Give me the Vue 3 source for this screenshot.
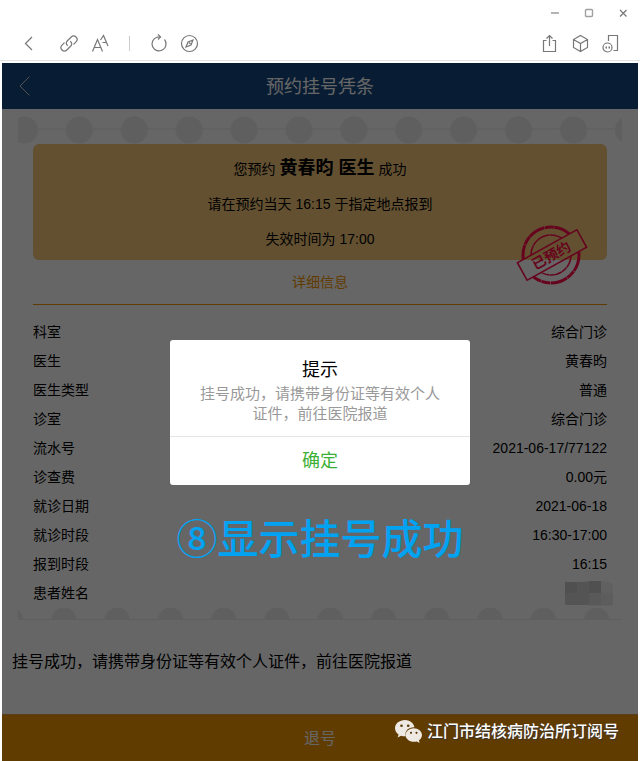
<template>
  <div class="window">
    <header class="chrome">
      <div class="title-bar">
        <button type="button" class="win-btn" aria-label="最小化">
          <svg width="12" height="12" viewBox="0 0 12 12"><path d="M2 6h8" stroke="#b4b4b4" stroke-width="2" /></svg>
        </button>
        <button type="button" class="win-btn" aria-label="最大化">
          <svg width="12" height="12" viewBox="0 0 12 12"><rect x="2.5" y="2.5" width="7" height="7" rx="1" fill="none" stroke="#a0a0a0" stroke-width="1.400" /></svg>
        </button>
        <button type="button" class="win-btn" aria-label="关闭">
          <svg width="12" height="12" viewBox="0 0 12 12"><path d="M3 3l6.500 6.500M9.500 3L3 9.500" stroke="#777" stroke-width="1.200" /></svg>
        </button>
      </div>
      <nav class="toolbar">
        <div class="tools">
          <button type="button" class="tool back" aria-label="返回">
            <svg viewBox="0 0 20 20"><path d="M14 4L7.500 10.500 14 17" /></svg>
          </button>
          <button type="button" class="tool" aria-label="复制链接">
            <svg viewBox="0 0 20 20">
              <path d="M8.800 12.800C7 11.500 6.800 9.500 8.200 8l4-4a3.400 3.400 0 0 1 4.800 0 3.400 3.400 0 0 1 0 4.800l-2.500 2.500" />
              <path d="M11.200 8.200c1.800 1.300 2 3.300.6 4.800l-4 4A3.400 3.400 0 0 1 3 17a3.400 3.400 0 0 1 0-4.800l2.500-2.500" />
            </svg>
          </button>
          <button type="button" class="tool" aria-label="字体大小">
            <svg viewBox="0 0 20 20">
              <path d="M2.500 18.500L7.500 6.500l5 12M4.500 14.500h6" />
              <path d="M10.500 7L13.500 2.500l4.500 10.500M12.500 9.500h4" />
            </svg>
          </button>
          <span class="divider"></span>
          <button type="button" class="tool" aria-label="刷新">
            <svg viewBox="0 0 20 20">
              <path d="M15.500 6.500A7 7 0 1 1 8 4.200l3.500-.2" />
              <path d="M9 1.500L11.500 4 9 6.500" />
            </svg>
          </button>
          <button type="button" class="tool" aria-label="浏览器打开">
            <svg viewBox="0 0 20 20">
              <circle cx="9.500" cy="10.500" r="8" />
              <path d="M13 7l-2 5-5 2 2-5zM9 9.500l1.500 1.500" />
            </svg>
          </button>
        </div>
        <div class="tools">
          <button type="button" class="tool" aria-label="分享">
            <svg viewBox="0 0 20 20">
              <path d="M6.500 7.500h-3v11h12v-11h-3M9.500 13V2.500M6.500 5.500l3-3 3 3" />
            </svg>
          </button>
          <button type="button" class="tool" aria-label="收藏">
            <svg viewBox="0 0 20 20">
              <path d="M9.500 2.500l7 4v8l-7 4-7-4v-8zM2.500 6.500l7 4 7-4M9.500 10.500v8" />
            </svg>
          </button>
          <button type="button" class="tool" aria-label="手机查看">
            <svg viewBox="0 0 20 20">
              <path d="M6.500 8V2.500h9v15h-4" />
              <circle cx="5.500" cy="14.500" r="4.500" />
              <path d="M3.500 14.500h1.500M6.500 14.500H8" stroke-width="1.800" />
            </svg>
          </button>
        </div>
      </nav>
    </header>

    <main class="page">
      <div class="nav-bar">
        <button type="button" class="nav-back" aria-label="返回">
          <svg width="12" height="20" viewBox="0 0 12 20"><path d="M10.500.5L1 10l9.500 9.500" fill="none" stroke="#cfcfcf" /></svg>
        </button>
        <h1>预约挂号凭条</h1>
      </div>

      <section class="ticket">
        <div class="dots dots-top"></div>
        <div class="ticket-body">
          <div class="notice">
            <p>您预约 <strong>黄春昀 医生</strong> 成功</p>
            <p>请在预约当天 16:15 于指定地点报到</p>
            <p>失效时间为 17:00</p>
            <svg class="stamp" width="72" height="62" viewBox="0 0 72 62">
              <defs>
                <mask id="stamp-gap">
                  <rect width="72" height="62" fill="#fff" />
                  <rect x="2" y="21" width="68" height="20" fill="#000" transform="rotate(-29 36 31)" />
                </mask>
              </defs>
              <g fill="none" stroke="#ff0a4c">
                <g mask="url(#stamp-gap)">
                  <circle cx="35" cy="31" r="28" stroke-width="3" stroke-dasharray="17 .6 9 .4" />
                  <circle cx="35" cy="31" r="20" stroke-width="1.600" stroke-dasharray="13 .5 6 .3" />
                </g>
                <rect x="2" y="21" width="68" height="20" stroke-width="1.600" transform="rotate(-29 36 31)" />
              </g>
              <text x="35" y="36" text-anchor="middle" transform="rotate(-29 36 31)">已预约</text>
            </svg>
          </div>
          <h2>详细信息</h2>
          <dl class="details">
            <div v-for="row in rows" :key="row.label" class="row">
              <dt>{{ row.label }}</dt>
              <dd>{{ row.value }}</dd>
            </div>
            <div class="row">
              <dt>患者姓名</dt>
              <dd class="masked">
                <svg width="48" height="26" viewBox="0 0 48 26">
                  <path d="M12 1Q30-1 44 1q4 1 4 5v14q0 5-4 5H24V12H12z" fill="#f0f0f0" />
                  <path d="M0 1h12v11H0zM24 0h12v12H24z" fill="#c8c8c8" />
                  <path d="M12 1h12v11H12zM0 12h24v12H0z" fill="#d2d2d2" />
                  <path d="M24 12h12v12H24z" fill="#dedede" />
                  <path d="M36 12h12v12H36z" fill="#e8e8e8" />
                </svg>
              </dd>
            </div>
          </dl>
        </div>
        <div class="dots dots-bottom"></div>
      </section>

      <p class="message">挂号成功，请携带身份证等有效个人证件，前往医院报道</p>

      <button type="button" class="cancel">退号</button>

      <div v-if="dialogOpen" class="overlay">
        <div class="dialog" role="dialog" aria-modal="true" aria-labelledby="dialog-title">
          <h3 id="dialog-title">提示</h3>
          <p>挂号成功，请携带身份证等有效个人证件，前往医院报道</p>
          <button type="button" @click="dialogOpen = false">确定</button>
        </div>
      </div>

      <div class="caption">⑧显示挂号成功</div>

      <div class="account">
        <svg width="28" height="24" viewBox="0 0 28 24">
          <path d="M10 0C4.500 0 0 3.600 0 8.200c0 2.600 1.400 4.800 3.600 6.300l-1 3 3.500-1.800c1.200.4 2.500.6 3.900.6h.8C9.300 11 13.500 7 19.500 7.200 18.600 3 14.700 0 10 0z" fill="#eee9e2" />
          <path d="M27 15c0-3.800-3.800-6.800-8.200-6.800S10.600 11.200 10.600 15s3.700 6.800 8.200 6.800c1 0 2-.1 2.900-.4l3 1.600-.8-2.600C25.800 19.200 27 17.200 27 15z" fill="#eee9e2" />
          <g fill="#5a3a08">
            <circle cx="6.500" cy="5.700" r="1.300" />
            <circle cx="13.200" cy="5.700" r="1.300" />
            <circle cx="16" cy="12.800" r="1.100" />
            <circle cx="21.500" cy="12.800" r="1.100" />
          </g>
        </svg>
        <span>江门市结核病防治所订阅号</span>
      </div>
    </main>
  </div>
</template>

<script setup>
import { ref } from 'vue'

const dialogOpen = ref(true)

const rows = [
  { label: '科室', value: '综合门诊' },
  { label: '医生', value: '黄春昀' },
  { label: '医生类型', value: '普通' },
  { label: '诊室', value: '综合门诊' },
  { label: '流水号', value: '2021-06-17/77122' },
  { label: '诊查费', value: '0.00元' },
  { label: '就诊日期', value: '2021-06-18' },
  { label: '就诊时段', value: '16:30-17:00' },
  { label: '报到时段', value: '16:15' }
]
</script>

<style>
body {
  background: #fff;
}
</style>

<style scoped>
.window {
  display: flex;
  flex-direction: column;
  min-height: 100vh;
  font-family: "Liberation Sans", "Noto Sans CJK SC", sans-serif;
  font-size: 14px;
  color: #000;
}

.window * {
  box-sizing: border-box;
}

h1, h2, h3, p, dl, dd {
  margin: 0;
  font-weight: normal;
}

button {
  padding: 0;
  border: none;
  background: none;
  font-family: inherit;
  cursor: pointer;
}

/* window chrome */
.chrome {
  border-bottom: 1px solid #e2e3e6;
}

.title-bar {
  display: flex;
  justify-content: flex-end;
}

.win-btn {
  display: flex;
  align-items: center;
  justify-content: center;
  width: 34px;
  height: 26px;
}

.toolbar {
  display: flex;
  justify-content: space-between;
  align-items: center;
  height: 34px;
  padding: 0 18px;
}

.tools {
  display: flex;
  align-items: center;
  gap: 11px;
}

.tool {
  width: 20px;
  height: 20px;
}

.tool svg {
  display: block;
  fill: none;
  stroke: #777;
  stroke-width: 1.2;
}

.back {
  margin-right: 10px;
}

.divider {
  width: 1px;
  height: 15px;
  margin: 0 8px;
  background: #ccc;
}

/* page */
.page {
  position: relative;
  display: flex;
  flex: 1;
  flex-direction: column;
  margin: 2px 2px 0;
  background: #fff;
}

.nav-bar {
  display: grid;
  grid-template-columns: 46px 1fr 46px;
  align-items: center;
  height: 46px;
  background: #144782;
  color: #fff;
}

.nav-back svg {
  display: block;
  margin: 0 auto;
}

.nav-bar h1 {
  padding-bottom: 2px;
  font-size: 18px;
  text-align: center;
}

.ticket {
  padding: 7px 16px 0;
}

.dots {
  background-repeat: repeat-x;
}

.dots-top {
  height: 28px;
  background-image:
    radial-gradient(circle at 50% 50%, #ededed 13px, transparent 14px),
    linear-gradient(transparent 12px, #f4f4f4 12px, #f4f4f4 14px, transparent 14px);
  background-size: calc(100% / 11) 28px;
  background-position: -21px 0;
}

.dots-bottom {
  height: 12px;
  background-image:
    radial-gradient(circle at 50% 100%, #ededed 12px, transparent 13px),
    linear-gradient(transparent 11px, #ededed 11px);
  background-size: calc(100% * 3 / 34) 12px;
  background-position: -34px 0;
}

.ticket-body {
  padding: 0 15px;
}

.notice {
  position: relative;
  padding: 7px 0 3px;
  border-radius: 6px;
  background: #f5c97c;
  line-height: 35px;
  text-align: center;
}

.notice strong {
  font-size: 18px;
  font-weight: bold;
}

.stamp {
  position: absolute;
  right: 19px;
  bottom: -26px;
}

.stamp text {
  fill: #ff0a4c;
  font-size: 14px;
  font-weight: bold;
}

.ticket h2 {
  border-bottom: 1px solid #f39600;
  color: #f39600;
  font-size: 14px;
  line-height: 44px;
  text-align: center;
}

.details {
  padding-top: 13px;
}

.row {
  display: flex;
  justify-content: space-between;
  height: 29px;
  line-height: 29px;
}

.masked {
  margin-right: -6px;
}

.masked svg {
  display: block;
  margin-top: 2px;
}

.message {
  flex: 1;
  padding: 30px 10px;
  font-size: 16px;
  line-height: 24px;
}

.cancel {
  height: 47px;
  padding-bottom: 3px;
  border-top: 1px solid #d9a050;
  background: #f29600;
  color: #fff;
  font-size: 16px;
}

.overlay {
  position: absolute;
  inset: 0;
  display: flex;
  align-items: center;
  justify-content: center;
  background: rgba(0, 0, 0, 0.6);
}

.dialog {
  width: 300px;
  border-radius: 3px;
  background: #fff;
  text-align: center;
}

.dialog h3 {
  padding-top: 16px;
  font-size: 18px;
  line-height: 28px;
}

.dialog p {
  padding: 0 30px 12px;
  color: #999;
  font-size: 15px;
  line-height: 20px;
}

.dialog button {
  display: block;
  width: 100%;
  height: 49px;
  padding-bottom: 3px;
  border-top: 1px solid #e5e5e5;
  color: #3cb035;
  font-size: 18px;
}

.caption {
  position: absolute;
  top: 447px;
  left: 0;
  right: 0;
  color: #00a2f2;
  font-size: 41px;
  font-weight: 500;
  line-height: 60px;
  text-align: center;
}

.account {
  position: absolute;
  right: 19px;
  bottom: 17px;
  display: flex;
  align-items: center;
  gap: 4px;
  color: #fff;
  font-size: 16px;
  font-weight: 500;
  line-height: 24px;
  text-shadow: 1px 1px 1px #333;
}
</style>
